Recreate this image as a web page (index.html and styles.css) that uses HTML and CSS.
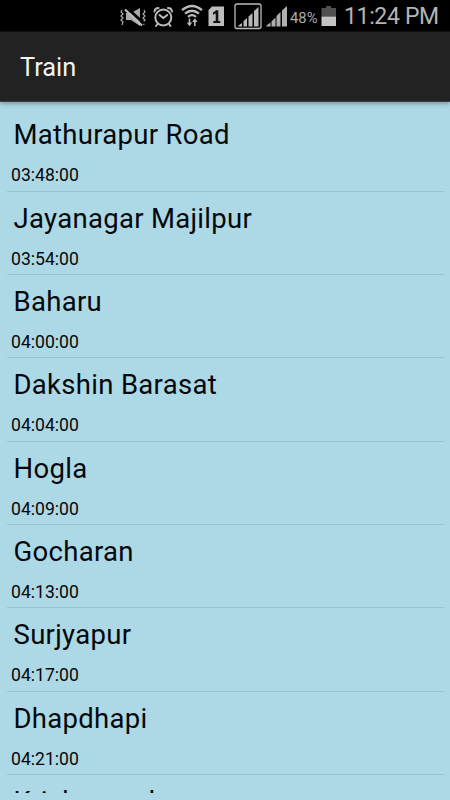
FILE: index.html
```html
<!DOCTYPE html>
<html lang="en">

<head>
  <meta charset="UTF-8" />
  <meta name="viewport" content="width=device-width, initial-scale=1.0" />
  <title>Train</title>
  <link rel="stylesheet" href="styles.css">
</head>

<body>
  <!-- Status bar -->
  <div class="status-bar">
    <svg class="status-icons" width="224" height="31" viewBox="118 0 224 31">
      <!-- Vibrate / mute -->
      <g fill="none" stroke="#aaa" stroke-width="1.2">
        <path d="M122 10l-1 2 2 2-2 2 2 2-2 2 2 2-1 3M144 10l1 2-2 2 2 2-2 2 2 2-2 2 1 3" />
      </g>
      <path d="M126 13h5l9-5v18l-9-6h-5z" fill="#aaa" />
      <path d="M127 8L144 23.500" stroke="#000" stroke-width="3" />
      <path d="M125 9.500L142 25.500" stroke="#bbb" stroke-width="2.200" />
      <!-- Alarm -->
      <g fill="none" stroke="#bbb" stroke-width="2" stroke-linecap="round">
        <circle cx="163.300" cy="17.500" r="8" />
        <path d="M154.500 11.500a4 4 0 0 1 4-3.500M172 11.500a4 4 0 0 0-4-3.500M157.500 24l-1.500 2M169 24l1.500 2M159.500 15l3.800 3 4-3" />
      </g>
      <!-- Wifi -->
      <g fill="none" stroke="#bbb" stroke-width="2.300">
        <path d="M182 10.200q10-8.400 20 0M185 13.600q7-5.800 14 0M188 16.800q4-3.300 8 0" />
        <path d="M189.500 18.500v6M194.800 26v-6" stroke-width="1.600" />
      </g>
      <path d="M186.800 22.500h5.400l-2.700 3.700zM192.100 22h5.400l-2.700-3.700z" fill="#bbb" />
      <!-- Sim card -->
      <path d="M208.500 10l3.500-3.500h12V26h-15.500z" fill="#bdbdbd" />
      <path d="M213 12.500l3.300-2.300h2V21h2v2h-7v-2h2.400v-7.400l-2.700 1.200z" fill="#111" />
      <!-- Signals -->
      <rect x="235" y="4" width="26" height="24.500" rx="2" fill="none" stroke="#bbb" stroke-width="1.300" />
      <path d="M238.500 26.500v-1l3.500-2.500v3.500zM243.500 26.500V21l3.500-3v8.500zM248.500 26.500v-10l4-3.500v13.500zM254 26.500V11l4.500-4v19.500z" fill="#b8b8b8" />
      <path d="M266.500 26.500v-1l4-3v4zM271.500 26.500v-5l4-4v9zM276.500 26.500v-10.500l4-4v14.500zM282 26.500V10.500l5-4.500v20.500z" fill="#b0b0b0" />
      <!-- Battery -->
      <path d="M321.500 8h4.500V6h5v2h5v8.500h-14.500z" fill="#505050" />
      <path d="M321.500 16.500H336V26h-14.500z" fill="#c4c4c4" />
      <text class="battery-text" x="290" y="22.500" textLength="27.500" lengthAdjust="spacingAndGlyphs">48%</text>
    </svg>
    <span class="clock">11:24 PM</span>
  </div>

  <!-- Title bar -->
  <header class="action-bar">
    <h1>Train</h1>
  </header>

  <!-- Station list -->
  <ul class="stations">
    <li><h2>Mathurapur Road</h2><p>03:48:00</p></li>
    <li><h2>Jayanagar Majilpur</h2><p>03:54:00</p></li>
    <li><h2>Baharu</h2><p>04:00:00</p></li>
    <li><h2>Dakshin Barasat</h2><p>04:04:00</p></li>
    <li><h2>Hogla</h2><p>04:09:00</p></li>
    <li><h2>Gocharan</h2><p>04:13:00</p></li>
    <li><h2>Surjyapur</h2><p>04:17:00</p></li>
    <li><h2>Dhapdhapi</h2><p>04:21:00</p></li>
    <li><h2>Krishnamohan</h2></li>
  </ul>
</body>

</html>
```
FILE: styles.css
```css
* {
  box-sizing: border-box;
  margin: 0;
  padding: 0;
}

body {
  height: 800px;
  overflow: hidden;
  background-color: #add8e6;
  font-family: Roboto, sans-serif;
  color: #05080a;
}

/* Status bar */
.status-bar {
  display: flex;
  height: 31px;
  padding-left: 118px;
  background-color: #000;
}

.status-icons {
  flex: none;
}

.battery-text {
  font-size: 14.5px;
  fill: #aaa;
}

.clock {
  padding-left: 2px;
  font-size: 23px;
  line-height: 34px;
  letter-spacing: -0.35px;
  color: #b4b4b4;
  white-space: nowrap;
}

/* Title bar */
.action-bar {
  height: 71px;
  padding-left: 20px;
  background-color: #222;
  border-top: 1px solid #111;
  border-bottom: 1px solid #3a4043;
  box-shadow: 0 1px 5px rgba(0, 0, 0, 0.4);
}

.action-bar h1 {
  font-size: 25.3px;
  font-weight: 400;
  line-height: 72px;
  color: #f3f3f3;
}

/* Station list */
.stations {
  height: 691px;
  padding: 6.4px 6px 0 7px;
  overflow: hidden;
  list-style: none;
}

.stations li {
  height: 83.33px;
  border-bottom: 1px solid #9bc2cf;
}

.stations h2 {
  height: 53px;
  padding-left: 6.5px;
  font-size: 27.5px;
  font-weight: 400;
  line-height: 53px;
  letter-spacing: 0.3px;
}

.stations p {
  padding-left: 4px;
  font-size: 17.6px;
  line-height: 29px;
}
```
